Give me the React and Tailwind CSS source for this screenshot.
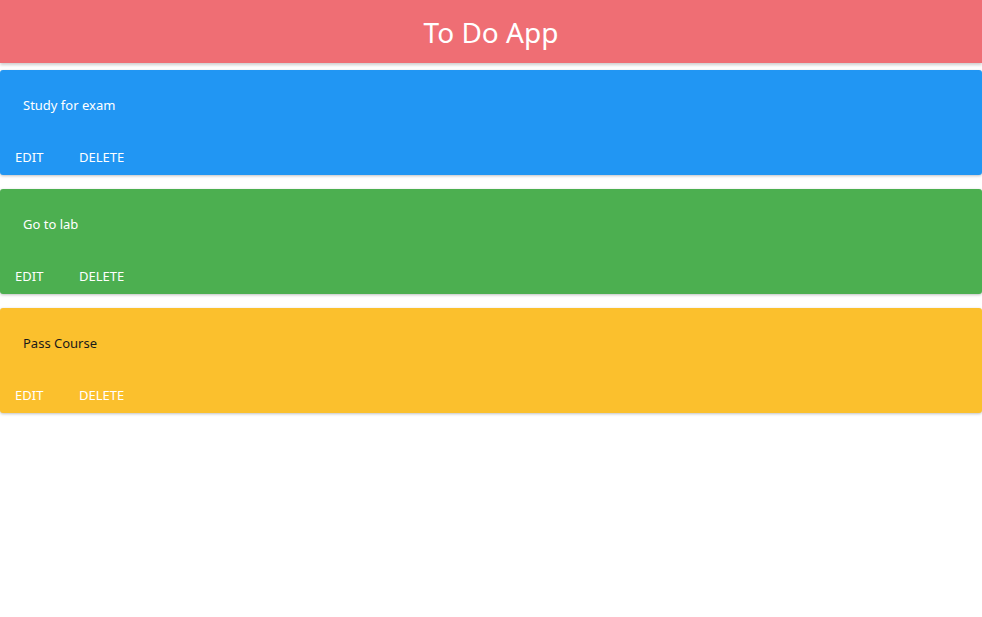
import React from 'react'

const todos = [
  { text: 'Study for exam', bg: 'bg-[#2196f3]', color: 'text-white' },
  { text: 'Go to lab', bg: 'bg-[#4caf50]', color: 'text-white' },
  { text: 'Pass Course', bg: 'bg-[#fbc02d]', color: 'text-[#1a1a1a]' },
]

function TodoCard({ todo }) {
  return (
    <div className={`${todo.bg} h-[105px] rounded-[3px] shadow-[0_1px_3px_rgba(0,0,0,0.25)] flex flex-col`}>
      <div className={`px-[23px] pt-[26px] text-[13px] leading-[18px] ${todo.color}`}>{todo.text}</div>
      <div className="mt-auto flex items-center pl-[15px] pb-[9px] text-[13px] leading-[18px] text-white">
        <button className="w-[64px] text-left">EDIT</button>
        <button className="text-left">DELETE</button>
      </div>
    </div>
  )
}

export default function App() {
  return (
    <div className="min-h-screen bg-white font-['Noto_Sans',sans-serif]">
      <header className="h-[63px] bg-[#ef6e74] shadow-[0_2px_3px_rgba(0,0,0,0.2)] flex items-center justify-center">
        <h1 className="text-[28px] text-white leading-none">To Do App</h1>
      </header>
      <div className="pt-[7px] flex flex-col gap-[14px]">
        {todos.map((t) => (
          <TodoCard key={t.text} todo={t} />
        ))}
      </div>
    </div>
  )
}
